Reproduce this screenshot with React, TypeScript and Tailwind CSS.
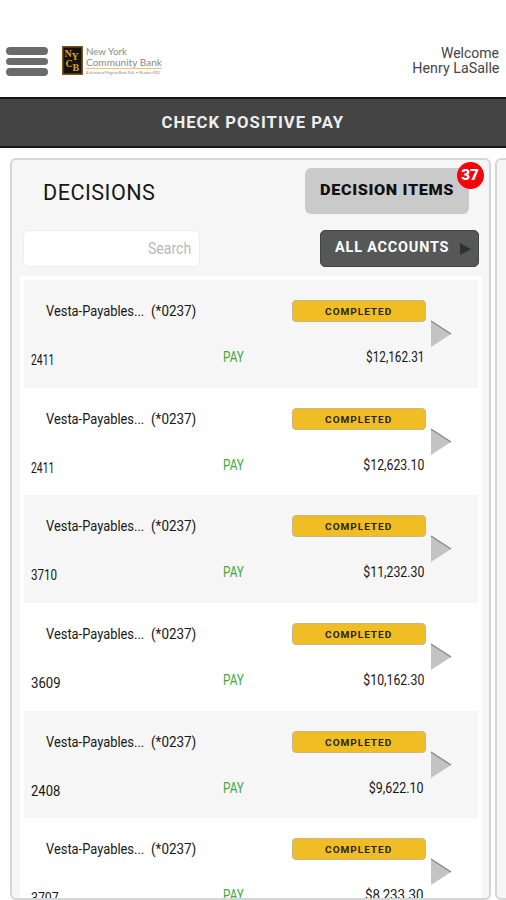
const rows = [
  { id: 1, check: "2411", amount: "$12,162.31", checkFit: "scale-x-[.74]", amountFit: "scale-x-[.84]" },
  { id: 2, check: "2411", amount: "$12,623.10", checkFit: "scale-x-[.74]", amountFit: "scale-x-[.88]" },
  { id: 3, check: "3710", amount: "$11,232.30", checkFit: "scale-x-[.83]", amountFit: "scale-x-[.88]" },
  { id: 4, check: "3609", amount: "$10,162.30", checkFit: "scale-x-[.94]", amountFit: "scale-x-[.88]" },
  { id: 5, check: "2408", amount: "$9,622.10", checkFit: "scale-x-[.93]", amountFit: "scale-x-[.89]" },
  { id: 6, check: "3707", amount: "$8,233.30", checkFit: "scale-x-[.88]", amountFit: "scale-x-[.95]" },
];

const BankLogo = () => (
  <div className="ml-[14px] mt-[46px] flex">
    <svg width="21" height="29" viewBox="0 0 21 29" className="shrink-0">
      <rect width="21" height="29" fill="#7b5a20" />
      <rect x="1.5" y="1.5" width="18" height="26" fill="#15130f" />
      <g fill="#d9a227" fontFamily="Liberation Serif, serif" fontWeight="700" fontSize="10">
        <text x="2.5" y="10.5">N</text>
        <text x="9.5" y="14">Y</text>
        <text x="3.5" y="20.5">C</text>
        <text x="10.5" y="24.5">B</text>
      </g>
    </svg>
    <div className="ml-[3px] w-[77px] whitespace-nowrap font-['Lato',sans-serif] text-[#8a8a8a]">
      <p className="origin-left scale-x-[1.08] text-[9px] leading-[11px]">New York</p>
      <p className="origin-left scale-x-[1.12] text-[9px] leading-[11px]">Community Bank</p>
      <div className="h-px w-[76px] bg-[#f0c860]" />
      <p className="mt-[2px] text-[3.5px] leading-[4px]">A division of Flagstar Bank, N.A. • Member FDIC</p>
    </div>
  </div>
);

const Header = () => (
  <header className="flex h-[97px] justify-between bg-white">
    <div className="flex">
      <div className="ml-[6px] mt-[47px] flex w-[42px] flex-col gap-[3px]">
        <span className="h-[7.5px] rounded-full bg-[#6b6b6b]" />
        <span className="h-[7.5px] rounded-full bg-[#6b6b6b]" />
        <span className="h-[7.5px] rounded-full bg-[#6b6b6b]" />
      </div>
      <BankLogo />
    </div>
    <div className="mr-[7px] mt-[46px] text-right text-[14px] leading-[15px] text-[#444]">
      <p className="origin-right">Welcome</p>
      <p className="origin-right scale-x-[1.02]">Henry LaSalle</p>
    </div>
  </header>
);

type RowProps = {
  check: string;
  amount: string;
  checkFit: string;
  amountFit: string;
};

const Row = ({ check, amount, checkFit, amountFit }: RowProps) => (
  <div className="h-[107.7px] shrink-0 whitespace-nowrap odd:bg-[#f6f6f6] even:bg-white">
    <div className="flex h-[52px] pt-[20px]">
      <div className="ml-[22px] w-[105px] pt-[1px] text-[14px] leading-5">
        <span className="inline-block origin-left scale-x-[.92]">Vesta-Payables...</span>
      </div>
      <div className="w-[141px] pt-[1px] text-[14px] leading-5">
        <span className="inline-block origin-left scale-x-[.96]">(*0237)</span>
      </div>
      <div className="h-[22px] w-[134px] rounded-[4px] border border-[#c4b78b] bg-[#f0bd25] text-center text-[9.5px] font-bold leading-[21px] text-[#2a2410]">
        <span className="inline-block scale-x-[1.06] tracking-[.9px]">COMPLETED</span>
      </div>
      <svg width="22" height="28" viewBox="0 0 22 28" className="ml-[4px] mt-[20px] shrink-0">
        <path d="M1 1 21 14 1 27Z" fill="#c3c3c3" />
        <path d="M1 1 21 14" stroke="#858585" strokeWidth="1.3" />
      </svg>
    </div>
    <div className="flex pt-[15px] text-[14px] leading-5">
      <div className="ml-[7px] w-[192px] pt-[3px]">
        <span className={`inline-block origin-left ${checkFit}`}>{check}</span>
      </div>
      <div className="w-[50px] text-[#42a83e]">
        <span className="inline-block origin-left scale-x-[.84]">PAY</span>
      </div>
      <div className="w-[151px] text-right">
        <span className={`inline-block origin-right ${amountFit}`}>{amount}</span>
      </div>
    </div>
  </div>
);

export default function App() {
  return (
    <div className="flex h-[900px] w-[506px] flex-col overflow-hidden bg-white font-['Roboto',sans-serif] text-[#171717]">
      <Header />
      <div className="h-[51px] border-y-2 border-[#161616] bg-[#444] text-center text-[16px] font-bold leading-[47px] text-[#eee]">
        <span className="inline-block scale-x-[1.04] tracking-[1px]">CHECK POSITIVE PAY</span>
      </div>
      <main className="flex pt-[10px]">
        <section className="ml-[10px] h-[742px] w-[481px] shrink-0 overflow-hidden rounded-[6px] border-2 border-[#d6d6d6] bg-[#f6f6f6]">
          <div className="flex h-[70px] justify-between">
            <h1 className="ml-[31px] mt-[18px] text-[22px] leading-[30px]">
              <span className="inline-block origin-left scale-x-[.98] tracking-[.5px]">DECISIONS</span>
            </h1>
            <div className="relative mr-[20px] mt-[8px] h-[46px] w-[164px] rounded-[6px] bg-[#cacaca] text-center text-[15px] font-black leading-[44px] text-[#111]">
              <span className="inline-block scale-x-[1.08] tracking-[.6px]">DECISION ITEMS</span>
              <span className="absolute -right-[15px] -top-[6px] flex size-[27px] items-center justify-center rounded-full bg-[#f50509] text-[14px] font-black leading-none text-white">
                <span className="-mt-[2px] scale-x-[1.1]">37</span>
              </span>
            </div>
          </div>
          <div className="flex justify-between">
            <div className="ml-[11px] h-[37px] w-[177px] rounded-[6px] border border-[#eee] bg-white pr-[8px] text-right text-[16px] leading-[36px] text-[#b9b9b9]">
              <span className="inline-block origin-right scale-x-[.88]">Search</span>
            </div>
            <div className="mr-[10px] flex h-[37px] w-[159px] items-center rounded-[5px] border border-[#444] bg-[#565858] pl-[14px] text-[14px] font-bold text-white">
              <div className="w-[125px] pb-[2px]">
                <span className="inline-block origin-left scale-x-[1.03] tracking-[.8px]">ALL ACCOUNTS</span>
              </div>
              <svg width="11" height="12" viewBox="0 0 11 12" className="shrink-0">
                <path d="M0 0 11 6 0 12Z" fill="#303030" />
              </svg>
            </div>
          </div>
          <div className="ml-[8px] mt-[9px] flex w-[462px] flex-col border-4 border-white">
            {rows.map(({ id, ...row }) => (
              <Row key={id} {...row} />
            ))}
          </div>
        </section>
        <section className="ml-[4px] h-[742px] w-[40px] shrink-0 rounded-[6px] border-2 border-[#d6d6d6] bg-[#f6f6f6]" />
      </main>
    </div>
  );
}
